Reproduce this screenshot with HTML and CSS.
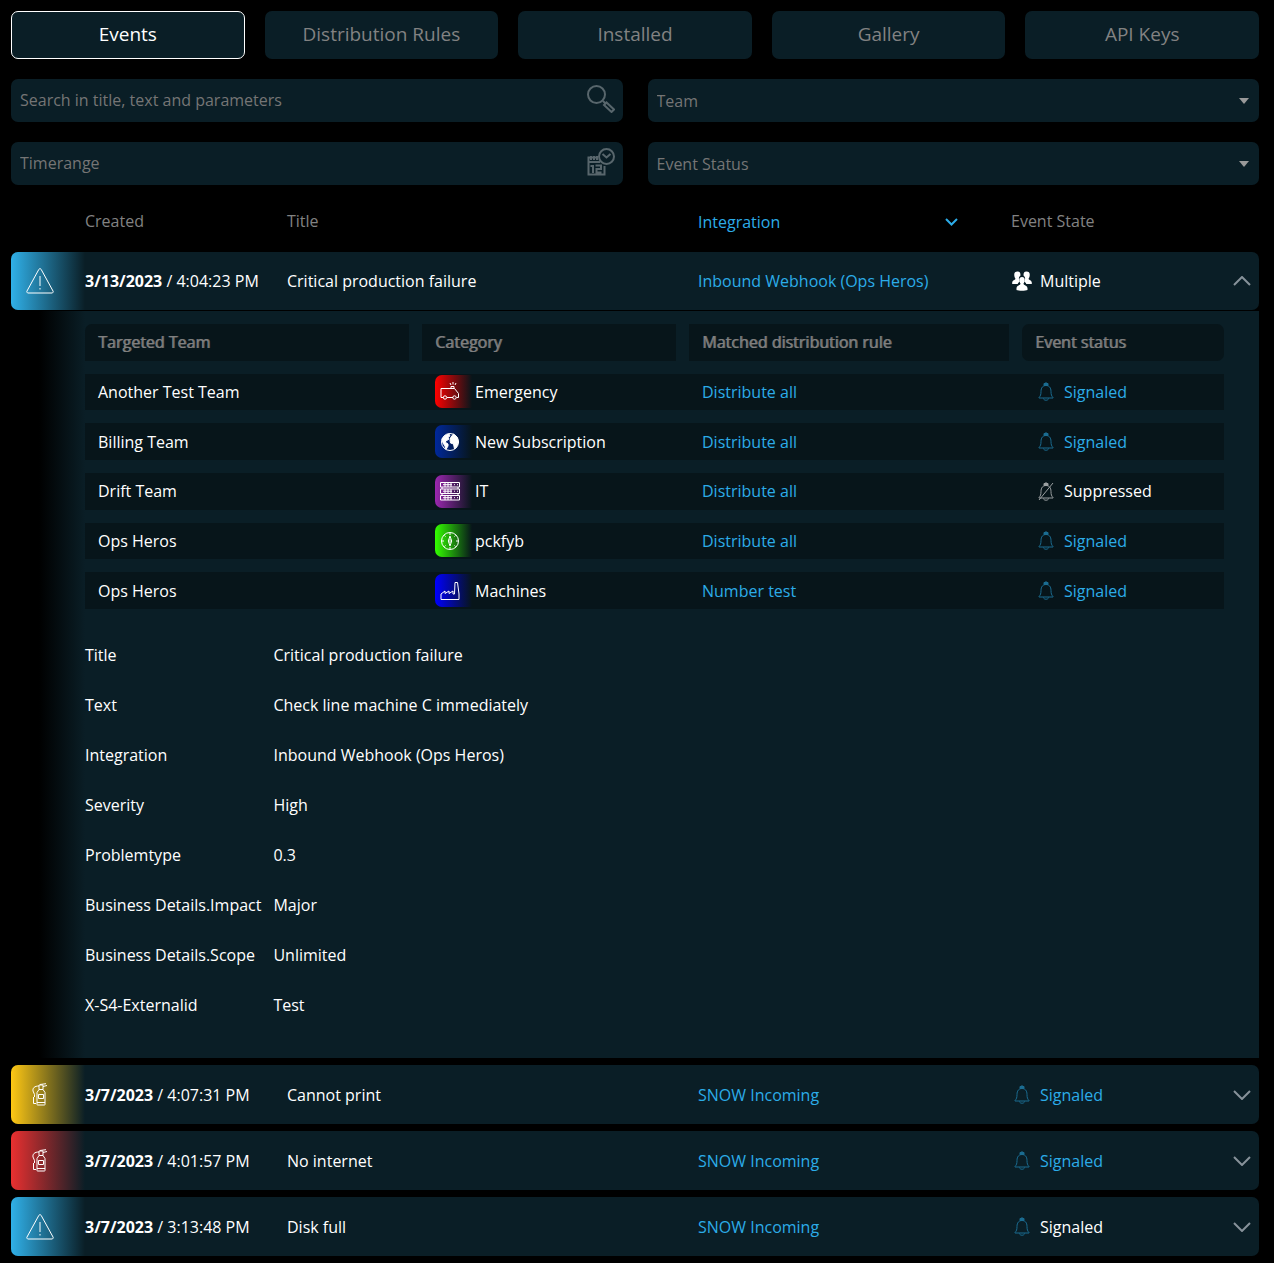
FILE: index.html
```html
<!DOCTYPE html>
<html lang="en">
<head>
<meta charset="utf-8">
<meta name="viewport" content="width=device-width, initial-scale=1">
<title>Events</title>
<link rel="stylesheet" href="styles.css">
</head>
<body>
<svg class="sprite" aria-hidden="true">
  <symbol id="bell" viewBox="0 0 16 19"><path d="M6.500 3V1.500Q8 0 9.500 1.500V3M1 15.500C2.500 14 3 12.500 3 9.500 3 5.500 5 3.500 8 3.500s5 2 5 6c0 3 .5 4.500 2 6v.5H1zM5.500 16.500c0 2.300 5 2.300 5 0"/><path class="fill" d="M6 1.500h4v2H6z"/></symbol>
  <symbol id="bell-off" viewBox="0 0 16 19"><path d="M6.500 3V1.500Q8 0 9.500 1.500V3M1 15.500C2.500 14 3 12.500 3 9.500 3 5.500 5 3.500 8 3.500s5 2 5 6c0 3 .5 4.500 2 6v.5H1zM5.500 16.500c0 2.300 5 2.300 5 0M1 18 15 1"/><path class="fill" d="M6 1.500h4v2H6z"/></symbol>
  <symbol id="warning" viewBox="0 0 28 26"><path d="M12.900 1.300a1.300 1.300 0 0 1 2.200 0L27 23a1.300 1.300 0 0 1-1 2H2a1.300 1.300 0 0 1-1-2zM14 8v10M14 20v1.500"/></symbol>
  <symbol id="extinguisher" viewBox="0 0 16 23"><path d="M5 21.500v-12l2-3h4l2 3v12q0 .5-.5.500h-7q-.5 0-.5-.500zM7 6.500V2h4v4.500zM11 3.500l4-1M8 1.500 14 .700M7 3C2.500 3 .5 5 1 8l1.500 3.500V14M1.500 14v6.500H4M6.500 11.500h5v4h-5zM5 19.500h8"/></symbol>
  <symbol id="chevron" viewBox="0 0 18 10"><path d="m1 1 8 8 8-8"/></symbol>
</svg>
<main class="page">
  <nav class="tabs" aria-label="Sections">
    <button class="tab active" type="button">Events</button>
    <button class="tab" type="button">Distribution Rules</button>
    <button class="tab" type="button">Installed</button>
    <button class="tab" type="button">Gallery</button>
    <button class="tab" type="button">API Keys</button>
  </nav>

  <form class="filters">
    <div class="field">
      <input type="text" aria-label="Search" placeholder="Search in title, text and parameters">
      <svg class="field-icon" viewBox="0 0 28 28" aria-hidden="true"><circle cx="9.500" cy="9.500" r="8.500"/><path d="m16 16 2.500 2.500M17 20l2.500-2.500 7.500 7-2.500 2.500z"/></svg>
    </div>
    <div class="field">
      <select aria-label="Team"><option>Team</option></select>
      <span class="arrow"></span>
    </div>
    <div class="field">
      <input type="text" aria-label="Timerange" placeholder="Timerange">
      <svg class="field-icon" viewBox="0 0 28 28" aria-hidden="true"><circle cx="19.500" cy="8.500" r="7.500"/><path d="m15.500 6 4 3.500 4-3.500M10 9.500H1.500v17h16V18M1 14h12M4 8v4M7 8v4M10 8v4M3.500 18H6v7M8.500 17.500h5.500v3.500H9.500v3.500h5"/></svg>
    </div>
    <div class="field">
      <select aria-label="Event Status"><option>Event Status</option></select>
      <span class="arrow"></span>
    </div>
  </form>

  <table class="events">
    <thead>
      <tr class="columns">
        <th></th>
        <th>Created</th>
        <th>Title</th>
        <th><button class="sort" type="button">Integration <svg viewBox="0 0 13 8" aria-hidden="true"><path d="m1 1 5.500 5.500L12 1"/></svg></button></th>
        <th>Event State</th>
      </tr>
    </thead>
    <tbody>
      <tr class="event open">
        <td class="badge blue"><svg class="warning"><use href="#warning"/></svg></td>
        <td><b>3/13/2023</b> / 4:04:23 PM</td>
        <td>Critical production failure</td>
        <td><a href="#">Inbound Webhook (Ops Heros)</a></td>
        <td class="state">
          <svg class="people" viewBox="0 0 20 20" aria-hidden="true"><path d="M5.500.500C3 .5 2 2 2.300 4.500c.2 1.800.7 2.600 1.200 3.200-.3 1.500-3 1.200-3.300 3.800V13h5.500c.5-1.500 1.500-2 2-2.500C6.500 8.500 6.500 6 8.500 4.500 8.500 2 8 .500 5.500.500zM14.500.500c2.500 0 3.500 1.500 3.200 4-.2 1.800-.7 2.600-1.200 3.200.3 1.500 3 1.200 3.300 3.800V13h-5.500c-.5-1.500-1.500-2-2-2.500 1.200-2 1.200-4.500-.8-6 0-2.500.5-4 3-4z"/><path d="M10 6c-2 0-3 1.500-2.700 3.500.2 1.500.7 2.300 1.200 3-.2 2-3.300 1.500-4 4.500v2c2 1 9 1 11 0v-2c-.7-3-3.800-2.500-4-4.500.5-.700 1-1.500 1.200-3C13 7.500 12 6 10 6z"/></svg>
          <span>Multiple</span>
          <button class="toggle" type="button" aria-label="Collapse" aria-expanded="true"><svg><use href="#chevron"/></svg></button>
        </td>
      </tr>
      <tr class="detail">
        <td colspan="5">
          <table class="targets">
            <thead>
              <tr><th>Targeted Team</th><th>Category</th><th>Matched distribution rule</th><th>Event status</th></tr>
            </thead>
            <tbody>
              <tr>
                <td>Another Test Team</td>
                <td><span class="category red"><svg viewBox="0 0 20 20"><path d="M3.500 15.500H1v-9h13.500l4 5v4h-2M7 15.500h6M11 6.500v-2h3v2M10 1l1 2M13 0v2.500M16 1l-1 2"/><circle cx="5" cy="15.500" r="1.700"/><circle cx="14.500" cy="15.500" r="1.700"/></svg></span>Emergency</td>
                <td><a href="#">Distribute all</a></td>
                <td class="status"><svg class="bell"><use href="#bell"/></svg><a href="#">Signaled</a></td>
              </tr>
              <tr>
                <td>Billing Team</td>
                <td><span class="category navy"><svg viewBox="0 0 20 20"><circle cx="10" cy="10" r="8.500"/><path class="fill" d="m2 7 3-3.500L9 2l1 2-2 1 1 2-3 2-1 1 3 2v2l-2 3.500-1-3.500-2-3zM11 5l2.500-3 3.500 3 1.500 5-2 5-2 2-1-5-3-1-.5-3z"/></svg></span>New Subscription</td>
                <td><a href="#">Distribute all</a></td>
                <td class="status"><svg class="bell"><use href="#bell"/></svg><a href="#">Signaled</a></td>
              </tr>
              <tr>
                <td>Drift Team</td>
                <td><span class="category purple"><svg viewBox="0 0 20 20"><path d="M.500 1.500h19v4.500H.5zM.5 8h19v4.500H.5zM.5 14.500h19V19H.5zM2 6v2M18 6v2M2 12.500v2M18 12.500v2M3 3.700h9M3 10.200h9M3 16.700h9M14 3.700h1M17 3.700h1M14 10.200h1M17 10.200h1M14 16.700h1M17 16.700h1M5 2v4M8 2v4M11 2v4M5 8v4M8 8v4M11 8v4M5 15v4M8 15v4M11 15v4"/></svg></span>IT</td>
                <td><a href="#">Distribute all</a></td>
                <td class="status"><svg class="bell off"><use href="#bell-off"/></svg>Suppressed</td>
              </tr>
              <tr>
                <td>Ops Heros</td>
                <td><span class="category green"><svg viewBox="0 0 20 20"><circle cx="10" cy="10" r="8.500"/><path d="M10 2v2M10 16v2M2 10h2M16 10h2M10 5l1.700 5-1.700 5-1.700-5zM10 8v4M4.500 4.500l1 1M15.500 4.500l-1 1M4.500 15.500l1-1M15.500 15.500l-1-1"/></svg></span>pckfyb</td>
                <td><a href="#">Distribute all</a></td>
                <td class="status"><svg class="bell"><use href="#bell"/></svg><a href="#">Signaled</a></td>
              </tr>
              <tr>
                <td>Ops Heros</td>
                <td><span class="category royal"><svg viewBox="0 0 20 20"><path d="M1 18.500V13l4-3v2.500L9 10v2.500l4-2.500v3h1.500L15 1.500h2.500L19 13v5.500z"/></svg></span>Machines</td>
                <td><a href="#">Number test</a></td>
                <td class="status"><svg class="bell"><use href="#bell"/></svg><a href="#">Signaled</a></td>
              </tr>
            </tbody>
          </table>
          <dl class="parameters">
            <dt>Title</dt><dd>Critical production failure</dd>
            <dt>Text</dt><dd>Check line machine C immediately</dd>
            <dt>Integration</dt><dd>Inbound Webhook (Ops Heros)</dd>
            <dt>Severity</dt><dd>High</dd>
            <dt>Problemtype</dt><dd>0.3</dd>
            <dt>Business Details.Impact</dt><dd>Major</dd>
            <dt>Business Details.Scope</dt><dd>Unlimited</dd>
            <dt>X-S4-Externalid</dt><dd>Test</dd>
          </dl>
        </td>
      </tr>
      <tr class="event">
        <td class="badge yellow"><svg class="extinguisher"><use href="#extinguisher"/></svg></td>
        <td><b>3/7/2023</b> / 4:07:31 PM</td>
        <td>Cannot print</td>
        <td><a href="#">SNOW Incoming</a></td>
        <td class="state"><svg class="bell"><use href="#bell"/></svg><a href="#">Signaled</a>
          <button class="toggle" type="button" aria-label="Expand" aria-expanded="false"><svg><use href="#chevron"/></svg></button></td>
      </tr>
      <tr class="event">
        <td class="badge crimson"><svg class="extinguisher"><use href="#extinguisher"/></svg></td>
        <td><b>3/7/2023</b> / 4:01:57 PM</td>
        <td>No internet</td>
        <td><a href="#">SNOW Incoming</a></td>
        <td class="state"><svg class="bell"><use href="#bell"/></svg><a href="#">Signaled</a>
          <button class="toggle" type="button" aria-label="Expand" aria-expanded="false"><svg><use href="#chevron"/></svg></button></td>
      </tr>
      <tr class="event">
        <td class="badge blue"><svg class="warning"><use href="#warning"/></svg></td>
        <td><b>3/7/2023</b> / 3:13:48 PM</td>
        <td>Disk full</td>
        <td><a href="#">SNOW Incoming</a></td>
        <td class="state"><svg class="bell"><use href="#bell"/></svg><span>Signaled</span>
          <button class="toggle" type="button" aria-label="Expand" aria-expanded="false"><svg><use href="#chevron"/></svg></button></td>
      </tr>
    </tbody>
  </table>
</main>
</body>
</html>
```
FILE: styles.css
```css
:root {
  --panel: #0a1e26;
  --inset: #07151a;
  --muted: #828282;
  --link: #2cace8;
}

* { box-sizing: border-box; }

body {
  margin: 0;
  background: #000;
  color: #fff;
  font: 16px/22px "Open Sans", sans-serif;
}

button, input, select {
  font: inherit;
  color: inherit;
  border: 0;
  background: none;
}

button { cursor: pointer; }
a { color: var(--link); text-decoration: none; }
svg { flex: none; fill: none; stroke: currentColor; }
.fill { fill: currentColor; }
.sprite { position: absolute; width: 0; height: 0; }

.page { padding: 11px 15px 6px 11px; }

/* Section tabs */
.tabs {
  display: grid;
  grid-template-columns: repeat(5, 1fr);
  gap: 20px;
}

.tab {
  height: 48px;
  padding: 0 0 2px;
  border: 1px solid transparent;
  border-radius: 7px;
  background: var(--panel);
  color: var(--muted);
  font-size: 19px;
}

.tab.active { border-color: #fff; color: #fff; }

/* Filters */
.filters {
  display: grid;
  grid-template-columns: 1fr 1fr;
  gap: 20px 25px;
  margin-top: 20px;
}

.field {
  display: flex;
  align-items: center;
  height: 43px;
  padding-right: 8px;
  border-radius: 7px;
  background: var(--panel);
  color: #757575;
}

.field input,
.field select {
  flex: 1;
  min-width: 0;
  height: 100%;
  padding: 0 9px 2px;
  outline: 0;
  appearance: none;
}

.field select { padding: 1px 9px 0; }
.field input::placeholder { color: #757575; opacity: 1; }
.field-icon { width: 28px; height: 28px; margin-bottom: 4px; color: #58666c; stroke-width: 2; }

.arrow {
  margin-right: 2px;
  border: 5px solid transparent;
  border-top: 6px solid #999;
  border-bottom: 0;
  pointer-events: none;
}

/* Event list */
.events, .events thead, .events tbody { display: block; }
.events th, .events td { padding: 0; text-align: left; font-weight: 400; }

.columns, .event {
  display: grid;
  grid-template-columns: 74px 202fr 411fr 313fr 248fr;
  align-items: center;
}

.columns { height: 67px; color: var(--muted); padding-top: 4px; }

.sort {
  display: flex;
  align-items: center;
  justify-content: space-between;
  width: 260px;
  padding: 2px 0 0;
  color: var(--link);
}

.sort svg { width: 13px; height: 8px; stroke-width: 2; }

.event {
  height: 59px;
  margin-top: 7px;
  border-radius: 7px;
  background: var(--panel);
  overflow: hidden;
}

.event.open { height: 58px; margin-top: 0; }
.event b { font-weight: 700; }

.badge {
  display: flex;
  align-items: center;
  align-self: stretch;
  justify-content: center;
  background: linear-gradient(to right, var(--tone), var(--panel));
}

.event .badge { padding-right: 16px; }
.blue { --tone: #30b0e8; }
.yellow { --tone: #ffc814; }
.crimson { --tone: #ea3030; }
.warning { width: 28px; height: 26px; }
.extinguisher { width: 16px; height: 23px; }

.state, .status { display: flex; align-items: center; }
.event .state { padding-right: 8px; }
.bell { width: 16px; height: 19px; margin: 0 10px 0 3px; color: #1b6c91; }
.bell.off { color: #9a9fa1; }
.people { width: 20px; height: 20px; margin: 0 8px 0 1px; fill: #fff; stroke: none; }

.toggle {
  display: flex;
  margin-left: auto;
  padding: 0;
  color: #87929a;
}

.toggle svg { width: 18px; height: 10px; stroke-width: 2; }
.toggle[aria-expanded="true"] svg { transform: rotate(180deg); }

/* Expanded event */
.detail { display: block; margin-top: 1px; }

.events .detail > td {
  display: block;
  padding: 13px 35px 28px 74px;
  background: linear-gradient(to right, #000 28px, var(--panel) 74px);
}

.events .targets {
  display: grid;
  grid-auto-rows: 1fr;
  gap: 13px;
  min-height: 285px;
}

.targets thead, .targets tbody { display: contents; }

.targets tr {
  display: grid;
  grid-template-columns: 324fr 254fr 320fr 202fr;
  column-gap: 13px;
}

.targets th, .targets td { display: flex; align-items: center; }
.events .targets th, .events .targets td { padding: 0 13px; }
.targets th { background: var(--inset); color: #808080; text-shadow: 1px 0 #6a6a6a; }
.targets th:first-child { border-radius: 7px 0 0; }
.targets th:last-child { border-radius: 7px; }
.targets tbody tr { background: var(--inset); }

.category {
  display: flex;
  align-items: center;
  width: 37px;
  height: 33px;
  margin-right: 3px;
  padding-left: 5px;
  border-radius: 7px 0 0 7px;
  background: linear-gradient(to right, var(--tone), var(--inset));
}

.category svg { width: 20px; height: 20px; }
.red { --tone: #f00; }
.navy { --tone: #00289b; }
.purple { --tone: #9c27b0; }
.green { --tone: #3f0; }
.royal { --tone: #00f; }

.parameters {
  display: grid;
  grid-template-columns: max-content 1fr;
  column-gap: 12px;
  margin: 21px 0 0;
  line-height: 50px;
}

.parameters dd { margin: 0; }
```
